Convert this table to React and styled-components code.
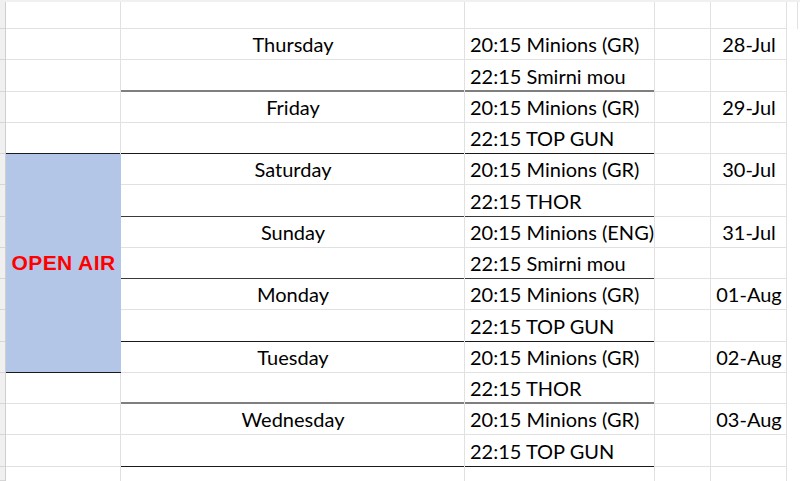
import React from "react";
import styled, { createGlobalStyle } from "styled-components";

const GRID = "#e1e1e1";

// bottom edges of a cell, drawn as inset shadows so they never change the row height
const EDGES = {
  grid: `inset 0 -1px 0 ${GRID}`,
  gray: "inset 0 -2px 0 #7f7f7f",
  dark: "inset 0 -1px 0 #3a3a3a",
  black: "inset 0 -1px 0 #1a1a1a",
  none: "inset 0 0 0 transparent",
};

const GlobalStyle = createGlobalStyle`
  html, body {
    margin: 0;
    padding: 0;
    background: #fff;
    overflow: hidden;
  }
  body {
    font-family: Lato, "Open Sans", sans-serif;
    color: #000;
  }
`;

const Page = styled.div`
  width: 800px;
  height: 481px;
  display: flex;
  flex-direction: column;
`;

const TopBand = styled.div`
  height: 2px;
  flex: none;
  background: #f0f0f0;
`;

const Sheet = styled.div`
  flex: 1;
  display: grid;
  grid-template-columns: 6px 115px 344px 190px 56px 76px 1fr;
  grid-template-rows: 27px repeat(14, 31.25px) 1fr;
`;

const RowEdge = styled.div`
  grid-column: 1;
  grid-row: ${(p) => p.$row};
  background: #f0f0f0;
  box-shadow: inset -1px 0 0 #cfcfcf, inset 0 -1px 0 #d6d6d6;
`;

const Cell = styled.div`
  grid-column: ${(p) => p.$col};
  grid-row: ${(p) => p.$row} / span ${(p) => p.$rowSpan || 1};
  display: flex;
  align-items: flex-end;
  justify-content: ${(p) => (p.$align === "left" ? "flex-start" : "center")};
  padding: 0 5px 4px;
  min-width: 0;
  background: ${(p) => p.$fill || "#fff"};
  box-shadow: ${(p) => (p.$noRight ? "inset 0 0 0 transparent" : `inset -1px 0 0 ${GRID}`)},
    ${(p) => EDGES[p.$edge || "grid"]};
  font-size: 20px;
  line-height: 24px;
  white-space: nowrap;
  overflow: hidden;
`;

const MergedLabel = styled(Cell)`
  align-items: center;
  padding: 0 0 1px;
  font-family: "Liberation Sans", Arial, sans-serif;
  font-weight: bold;
  font-size: 21px;
  letter-spacing: 0.4px;
  color: #ff0000;
`;

const Beyond = styled.div`
  grid-column: 7;
  grid-row: ${(p) => p.$row};
  background: #fff;
  box-shadow: ${(p) => (p.$mark ? `inset -2px 0 0 #fff, inset -3px 0 0 ${GRID}` : "none")};
`;

const schedule = [
  { day: "Thursday", shows: ["20:15 Minions (GR)", "22:15 Smirni mou"], date: "28-Jul", edge: "gray" },
  { day: "Friday", shows: ["20:15 Minions (GR)", "22:15 TOP GUN"], date: "29-Jul", edge: "black" },
  { day: "Saturday", shows: ["20:15 Minions (GR)", "22:15 THOR"], date: "30-Jul", edge: "dark" },
  { day: "Sunday", shows: ["20:15 Minions (ENG)", "22:15 Smirni mou"], date: "31-Jul", edge: "dark" },
  { day: "Monday", shows: ["20:15 Minions (GR)", "22:15 TOP GUN"], date: "01-Aug", edge: "black" },
  { day: "Tuesday", shows: ["20:15 Minions (GR)", "22:15 THOR"], date: "02-Aug", edge: "gray" },
  { day: "Wednesday", shows: ["20:15 Minions (GR)", "22:15 TOP GUN"], date: "03-Aug", edge: "black" },
];

const ROWS = 16;

// column A: a few plain cells, then the merged "OPEN AIR" block (grid rows 6-12)
const columnA = [
  { row: 1 },
  { row: 2 },
  { row: 3 },
  { row: 4 },
  { row: 5, edge: "black" },
  { row: 6, span: 7, label: "OPEN AIR", edge: "black" },
  { row: 13 },
  { row: 14 },
  { row: 15 },
  { row: 16, edge: "none" },
];

const DayBlock = ({ item, row }) => (
  <>
    <Cell $col={3} $row={row}>{item.day}</Cell>
    <Cell $col={4} $row={row} $align="left">{item.shows[0]}</Cell>
    <Cell $col={5} $row={row} />
    <Cell $col={6} $row={row}>{item.date}</Cell>
    <Cell $col={3} $row={row + 1} $edge={item.edge} />
    <Cell $col={4} $row={row + 1} $align="left" $edge={item.edge}>{item.shows[1]}</Cell>
    <Cell $col={5} $row={row + 1} />
    <Cell $col={6} $row={row + 1} />
  </>
);

const App = () => {
  const rows = Array.from({ length: ROWS }, (_, i) => i + 1);

  return (
    <Page>
      <GlobalStyle />
      <TopBand />
      <Sheet>
        {rows.map((r) => (
          <RowEdge key={`edge-${r}`} $row={r} />
        ))}
        {rows.map((r) => (
          <Beyond key={`beyond-${r}`} $row={r} $mark={r === 1} />
        ))}

        {columnA.map((c) =>
          c.label ? (
            <MergedLabel key="open-air" $col={2} $row={c.row} $rowSpan={c.span} $fill="#b4c6e7" $edge={c.edge} $noRight>
              {c.label}
            </MergedLabel>
          ) : (
            <Cell key={`a-${c.row}`} $col={2} $row={c.row} $edge={c.edge} />
          )
        )}

        {[3, 4, 5, 6].map((col) => (
          <Cell key={`top-${col}`} $col={col} $row={1} />
        ))}

        {schedule.map((item, i) => (
          <DayBlock key={item.day} item={item} row={2 + i * 2} />
        ))}

        {[3, 4, 5, 6].map((col) => (
          <Cell key={`tail-${col}`} $col={col} $row={16} $edge="none" />
        ))}
      </Sheet>
    </Page>
  );
};

export default App;
